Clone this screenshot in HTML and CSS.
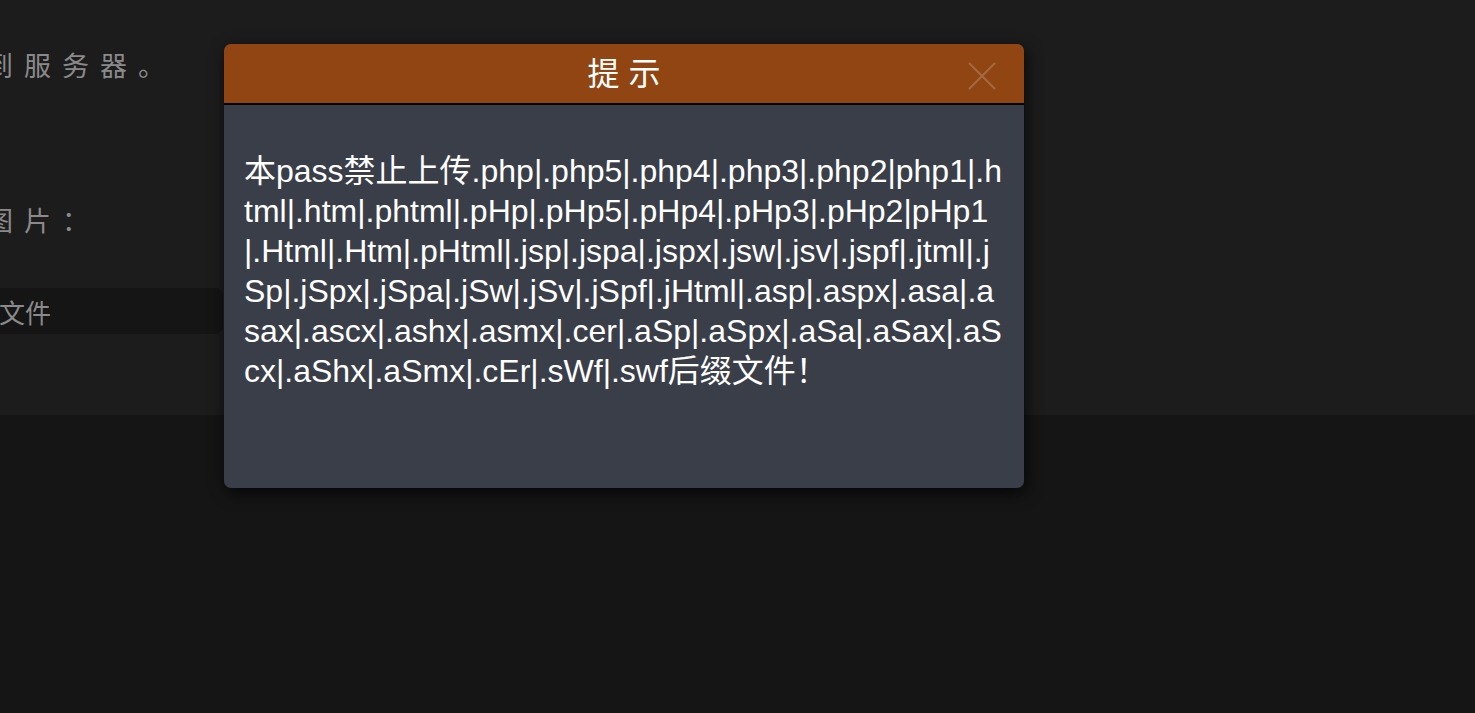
FILE: index.html
```html
<!DOCTYPE html>
<html lang="zh-CN">
<head>
<meta charset="utf-8">
<title>提示</title>
<link rel="stylesheet" href="styles.css">
</head>
<body>
<div class="page">
  <section class="upload">
    <p class="intro"><span class="cut">到</span>服务器。</p>
    <p class="label"><span class="cut">图</span>片：</p>
    <div class="file-input"><span class="file-text">文件</span></div>
  </section>
  <section class="lower"></section>
</div>

<div class="dialog">
  <div class="dialog-head">
    <span class="dialog-title">提 示</span>
    <span class="dialog-close" aria-label="关闭">
      <svg width="28" height="28" viewBox="0 0 28 28"><path d="M1 1L27 27M27 1L1 27" stroke="currentColor" stroke-width="2" fill="none"/></svg>
    </span>
  </div>
  <div class="dialog-body">本pass禁止上传.php|.php5|.php4|.php3|.php2|php1|.html|.htm|.phtml|.pHp|.pHp5|.pHp4|.pHp3|.pHp2|pHp1|.Html|.Htm|.pHtml|.jsp|.jspa|.jspx|.jsw|.jsv|.jspf|.jtml|.jSp|.jSpx|.jSpa|.jSw|.jSv|.jSpf|.jHtml|.asp|.aspx|.asa|.asax|.ascx|.ashx|.asmx|.cer|.aSp|.aSpx|.aSa|.aSax|.aScx|.aShx|.aSmx|.cEr|.sWf|.swf后缀文件！</div>
</div>
</body>
</html>
```

FILE: styles.css
```css
html, body {
  margin: 0;
  padding: 0;
}
body {
  background: #151515;
  font-family: "Liberation Sans", "Noto Sans CJK SC", sans-serif;
  overflow: hidden;
  height: 713px;
}
.page {
  display: flex;
  flex-direction: column;
}
.upload {
  background: #1c1c1c;
  height: 415px;
  display: flex;
  flex-direction: column;
  overflow: hidden;
}
.intro, .label {
  margin: 0;
  color: #8a8a8a;
  font-size: 27px;
  line-height: 40px;
  letter-spacing: 11px;
  white-space: nowrap;
}
.intro {
  margin-top: 47px;
}
.label {
  margin-top: 115px;
}
.cut {
  margin-left: -14px;
}
.file-input {
  margin-top: 46px;
  margin-left: -20px;
  width: 243px;
  height: 46px;
  background: #151515;
  border-radius: 8px;
  display: flex;
  align-items: center;
}
.file-text {
  margin-left: 19px;
  color: #8a8a8a;
  font-size: 26px;
}
.lower {
  flex: 1;
}
.dialog {
  position: absolute;
  left: 224px;
  top: 44px;
  width: 800px;
  height: 444px;
  border-radius: 7px;
  overflow: hidden;
  background: #3a3e49;
  box-shadow: 2px 5px 16px rgba(0, 0, 0, 0.75);
  display: flex;
  flex-direction: column;
}
.dialog-head {
  height: 59px;
  background: #904513;
  border-bottom: 2px solid #000;
  display: flex;
  align-items: center;
  justify-content: center;
  position: relative;
}
.dialog-title {
  color: #fff;
  font-size: 32px;
  line-height: 40px;
}
.dialog-close {
  position: absolute;
  right: 28px;
  top: 18px;
  width: 28px;
  height: 28px;
  color: rgba(255, 255, 255, 0.2);
  display: flex;
}
.dialog-body {
  flex: 1;
  padding: 46px 20px 0 20px;
  color: #fff;
  font-size: 32px;
  line-height: 40px;
  word-break: break-all;
}
```
